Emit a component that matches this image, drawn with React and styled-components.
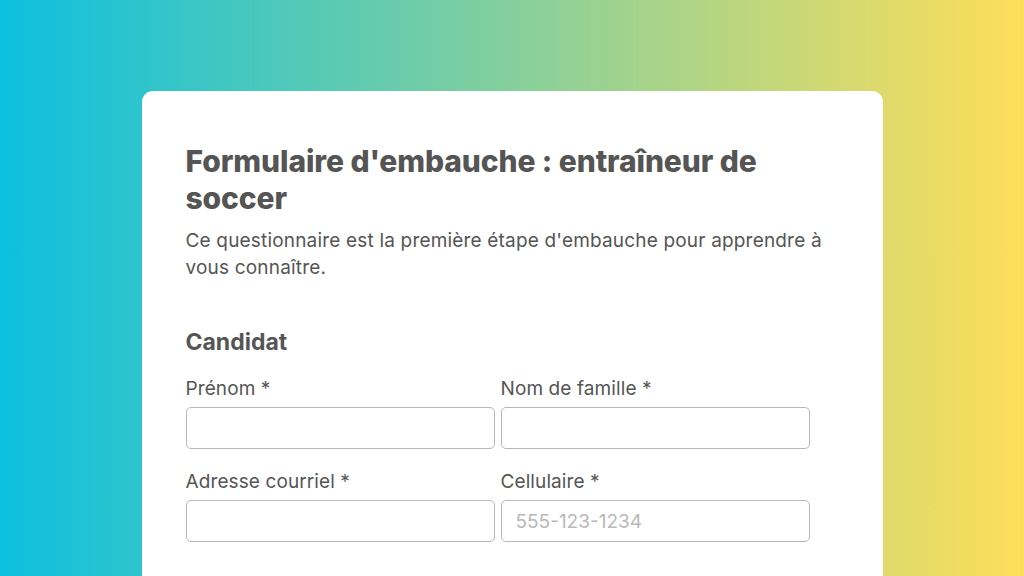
import React from "react";
import styled, { createGlobalStyle } from "styled-components";

const Global = createGlobalStyle`
  html, body { margin: 0; padding: 0; }
  body {
    font-family: Inter, "Liberation Sans", Arial, sans-serif;
    background: linear-gradient(90deg, #0cc0df 0%, #ffde59 100%);
    min-height: 576px;
    overflow: hidden;
  }
`;

const Page = styled.div`
  width: 1024px;
  height: 576px;
  display: flex;
  justify-content: center;
  padding-top: 91px;
  box-sizing: border-box;
  overflow: hidden;
`;

const Card = styled.div`
  width: 741px;
  height: 600px;
  background: #ffffff;
  border-radius: 11px;
  padding: 52px 44px 0 44px;
  box-sizing: border-box;
  color: #555555;
`;

const Title = styled.h1`
  margin: 0;
  font-size: 30px;
  line-height: 37px;
  font-weight: 800;
  letter-spacing: -0.1px;
  color: #555555;
  max-width: 620px;
`;

const Description = styled.p`
  margin: 10px 0 0 0;
  font-size: 19px;
  line-height: 27px;
  letter-spacing: 0.18px;
  color: #555555;
  max-width: 650px;
`;

const Section = styled.h2`
  margin: 47px 0 0 0;
  font-size: 23px;
  line-height: 28px;
  font-weight: 700;
  color: #555555;
`;

const Grid = styled.div`
  margin-top: 22px;
  display: grid;
  grid-template-columns: 309px 309px;
  column-gap: 6px;
  row-gap: 22px;
`;

const Field = styled.div`
  display: flex;
  flex-direction: column;
  gap: 7px;
`;

const Label = styled.label`
  font-size: 19px;
  line-height: 22px;
  letter-spacing: 0.1px;
  color: #555555;
`;

const Input = styled.input`
  box-sizing: border-box;
  width: 100%;
  height: 42px;
  border: 1px solid #b8b8b8;
  border-radius: 5px;
  padding: 0 14px;
  font-family: inherit;
  font-size: 19px;
  color: #555555;
  background: #fff;
  outline: none;
  &::placeholder { color: #b8b8b8; }
`;

const fields = [
  { label: "Prénom *" },
  { label: "Nom de famille *" },
  { label: "Adresse courriel *" },
  { label: "Cellulaire *", placeholder: "555-123-1234" },
];

export default function App() {
  return (
    <>
      <Global />
      <Page>
        <Card>
          <Title>Formulaire d'embauche : entraîneur de soccer</Title>
          <Description>
            Ce questionnaire est la première étape d'embauche pour apprendre à vous connaître.
          </Description>
          <Section>Candidat</Section>
          <Grid>
            {fields.map((f) => (
              <Field key={f.label}>
                <Label>{f.label}</Label>
                <Input placeholder={f.placeholder || ""} />
              </Field>
            ))}
          </Grid>
        </Card>
      </Page>
    </>
  );
}
